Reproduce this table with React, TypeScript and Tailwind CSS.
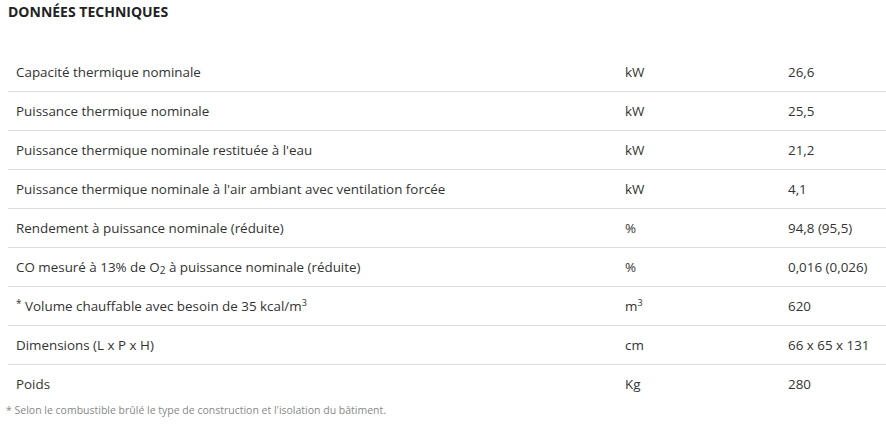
const rows: [React.ReactNode, React.ReactNode, string][] = [
  ['Capacité thermique nominale', 'kW', '26,6'],
  ['Puissance thermique nominale', 'kW', '25,5'],
  ['Puissance thermique nominale restituée à l\'eau', 'kW', '21,2'],
  ['Puissance thermique nominale à l\'air ambiant avec ventilation forcée', 'kW', '4,1'],
  ['Rendement à puissance nominale (réduite)', '%', '94,8 (95,5)'],
  [
    <>
      CO mesuré à 13% de O<sub className="text-[10px]">2</sub> à puissance nominale (réduite)
    </>,
    '%',
    '0,016 (0,026)',
  ],
  [
    <>
      <span className="text-[10px] align-top">*</span> Volume chauffable avec besoin de 35 kcal/m
      <sup className="text-[9px]">3</sup>
    </>,
    <>
      m<sup className="text-[9px]">3</sup>
    </>,
    '620',
  ],
  ['Dimensions (L x P x H)', 'cm', '66 x 65 x 131'],
  ['Poids', 'Kg', '280'],
];

export default function App() {
  return (
    <div className="w-[886px] h-[435px] bg-white text-[#333] font-['Open_Sans',sans-serif] pl-2">
      <h2 className="pt-[3px] text-[14px] font-bold text-[#222] leading-[18px]">DONNÉES TECHNIQUES</h2>
      <div className="mt-[32px]">
        {rows.map(([label, unit, value], i) => (
          <div
            key={i}
            className={`flex items-center h-[39px] text-[13.4px] ${i < rows.length - 1 ? 'border-b border-[#dcdcdc]' : ''}`}
          >
            <div className="w-[617px] pl-2">{label}</div>
            <div className="w-[163px]">{unit}</div>
            <div>{value}</div>
          </div>
        ))}
      </div>
      <p className="-ml-[2px] -mt-[1px] text-[10.5px] text-[#888]">
        * Selon le combustible brûlé le type de construction et l'isolation du bâtiment.
      </p>
    </div>
  );
}
